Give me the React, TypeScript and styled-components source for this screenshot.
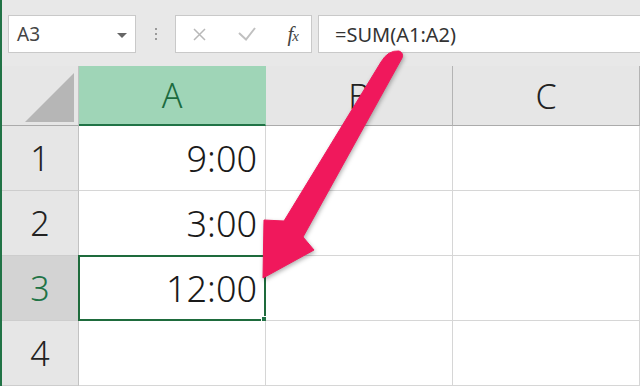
import React from 'react';
import styled, { createGlobalStyle } from 'styled-components';

const GlobalStyle = createGlobalStyle`
    html, body {
        margin: 0;
        padding: 0;
        background: #e8e8e8;
    }
    body {
        font-family: 'Noto Sans', 'Liberation Sans', sans-serif;
    }
`;

const Sheet = styled.div`
    position: relative;
    width: 640px;
    height: 386px;
    overflow: hidden;
    box-sizing: border-box;
    border-left: 2px solid #217346;
    background: #e8e8e8;
`;

const FormulaBar = styled.div`
    display: flex;
    align-items: flex-start;
    height: 66px;
    box-sizing: border-box;
    padding: 15px 0 0 6px;
`;

const Box = styled.div`
    display: flex;
    align-items: center;
    height: 38px;
    box-sizing: border-box;
    background: #fff;
    border: 1px solid #c9c9c9;
`;

const NameBox = styled(Box)`
    width: 128px;
    padding: 0 8px 0 8px;
    justify-content: space-between;
    font-size: 19px;
    color: #444;
`;

const Caret = styled.span`
    width: 0;
    height: 0;
    margin-top: 2px;
    border-left: 5px solid transparent;
    border-right: 5px solid transparent;
    border-top: 5px solid #666;
`;

const Grip = styled.div`
    display: flex;
    flex-direction: column;
    align-items: center;
    justify-content: center;
    gap: 3px;
    width: 39px;
    height: 38px;

    span {
        width: 2px;
        height: 2px;
        background: #9a9a9a;
    }
`;

const FnBox = styled(Box)`
    width: 137px;
    padding: 0 13px 0 17px;
    justify-content: space-between;
`;

const Fx = styled.span`
    font-family: 'Liberation Serif', serif;
    font-style: italic;
    font-size: 21px;
    color: #444;
    letter-spacing: -1px;

    small {
        font-size: 15px;
    }
`;

const FormulaInput = styled(Box)`
    flex: 1;
    margin-left: 6px;
    margin-right: -2px;
    padding-left: 16px;
    font-size: 20px;
    color: #333;
`;

const Grid = styled.div`
    display: grid;
    grid-template-columns: 77px 187px 187px 1fr;
    grid-template-rows: 60px repeat(4, 65px);
`;

const Corner = styled.div`
    position: relative;
    background: #e6e6e6;
    box-sizing: border-box;
    border-right: 1px solid #c2c2c2;
    border-bottom: 1px solid #ababab;

    &::after {
        content: '';
        position: absolute;
        right: 4px;
        bottom: 3px;
        width: 0;
        height: 0;
        border-left: 49px solid transparent;
        border-bottom: 49px solid #b6b6b6;
    }
`;

const ColHead = styled.div<{ $active?: boolean }>`
    display: flex;
    align-items: center;
    justify-content: center;
    box-sizing: border-box;
    font-size: 34px;
    font-weight: 300;
    background: ${(p) => (p.$active ? '#9fd5b7' : '#e6e6e6')};
    color: ${(p) => (p.$active ? '#1c6b3f' : '#222')};
    border-right: 1px solid ${(p) => (p.$active ? '#9fd5b7' : '#b4b4b4')};
    border-bottom: ${(p) => (p.$active ? '2px solid #217346' : '1px solid #ababab')};
`;

const RowHead = styled.div<{ $active?: boolean }>`
    display: flex;
    align-items: center;
    justify-content: center;
    box-sizing: border-box;
    font-size: 34px;
    font-weight: 300;
    background: ${(p) => (p.$active ? '#d3d3d3' : '#e6e6e6')};
    color: ${(p) => (p.$active ? '#217346' : '#222')};
    border-right: 1px solid #c2c2c2;
    border-bottom: 1px solid #cdcdcd;
`;

const Cell = styled.div<{ $selected?: boolean }>`
    position: relative;
    display: flex;
    align-items: center;
    justify-content: flex-end;
    box-sizing: border-box;
    padding-right: 8px;
    font-size: 36px;
    font-weight: 300;
    color: #1a1a1a;
    background: #fff;
    border-right: 1px solid #d6d6d6;
    border-bottom: 1px solid #d6d6d6;

    ${(p) =>
        p.$selected &&
        `
        &::before {
            content: '';
            position: absolute;
            left: -1px;
            top: -1px;
            right: -1px;
            bottom: -1px;
            border: 2px solid #1e6b3c;
        }
        &::after {
            content: '';
            position: absolute;
            right: -5px;
            bottom: -5px;
            width: 7px;
            height: 7px;
            background: #217346;
            border: 1px solid #fff;
        }
    `}
`;

const Overlay = styled.svg`
    position: absolute;
    top: 0;
    left: -2px;
    width: 640px;
    height: 386px;
    pointer-events: none;
    filter: drop-shadow(1px 2px 2px rgba(0, 0, 0, 0.3));
`;

const columns = ['A', 'B', 'C'];
const rows: string[][] = [
    ['9:00', '', ''],
    ['3:00', '', ''],
    ['12:00', '', ''],
    ['', '', ''],
];

const App = () => {
    return (
        <>
            <GlobalStyle />
            <Sheet>
                <FormulaBar>
                    <NameBox>
                        A3
                        <Caret />
                    </NameBox>
                    <Grip>
                        <span />
                        <span />
                        <span />
                    </Grip>
                    <FnBox>
                        <svg width='13' height='13' viewBox='0 0 13 13'>
                            <path d='M1 1L12 12M12 1L1 12' stroke='#b8b8b8' strokeWidth='1.5' />
                        </svg>
                        <svg width='18' height='14' viewBox='0 0 18 14'>
                            <path d='M1 6L8 12.5L17 1' stroke='#c0c0c0' strokeWidth='2' fill='none' />
                        </svg>
                        <Fx>
                            f<small>x</small>
                        </Fx>
                    </FnBox>
                    <FormulaInput>=SUM(A1:A2)</FormulaInput>
                </FormulaBar>
                <Grid>
                    <Corner />
                    {columns.map((c, i) => (
                        <ColHead key={c} $active={i === 0}>
                            {c}
                        </ColHead>
                    ))}
                    {rows.map((row, r) => (
                        <React.Fragment key={r}>
                            <RowHead $active={r === 2}>{r + 1}</RowHead>
                            {row.map((val, c) => (
                                <Cell key={c} $selected={r === 2 && c === 0}>
                                    {val}
                                </Cell>
                            ))}
                        </React.Fragment>
                    ))}
                </Grid>
                {/* pointer arrow drawn over the sheet */}
                <Overlay viewBox='0 0 640 386'>
                    <path
                        d='M381 62 Q388 50 399 51 Q404 53 402 58 L303 237 L314 250 L263 278 L264 220 L284 221 Z'
                        fill='#f0185c'
                        stroke='#f0185c'
                        strokeWidth='1'
                        strokeLinejoin='round'
                    />
                </Overlay>
            </Sheet>
        </>
    );
};

export default App;
